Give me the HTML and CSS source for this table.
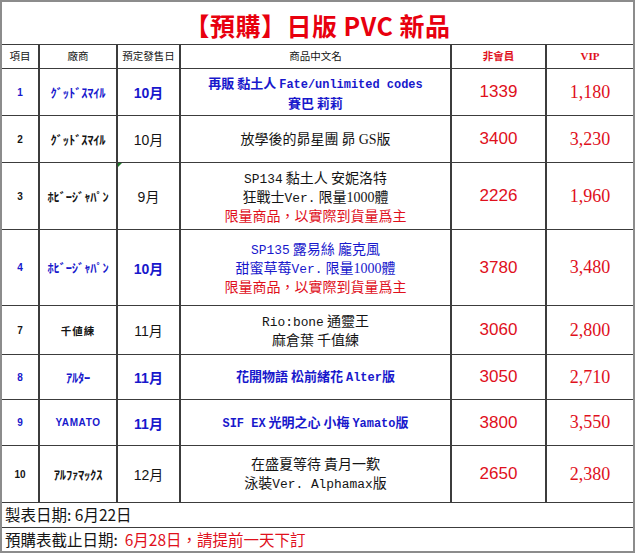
FILE: index.html
```html
<!DOCTYPE html>
<html lang="zh-Hant">
<head>
<meta charset="utf-8">
<title>【預購】日版 PVC 新品</title>
<link rel="stylesheet" href="styles.css">
</head>
<body>
<div class="sheet">
  <div class="c title">【預購】日版 PVC 新品</div>

  <div class="c hd">項目</div>
  <div class="c hd">廠商</div>
  <div class="c hd">預定發售日</div>
  <div class="c hd">商品中文名</div>
  <div class="c hd red b">非會員</div>
  <div class="c hd red b vip">VIP</div>

  <div class="c no blue">1</div>
  <div class="c mk blue">ｸﾞｯﾄﾞｽﾏｲﾙ</div>
  <div class="c mo blue b">10月</div>
  <div class="c pn blue b sm"><div>再販 黏土人 <span class="m">Fate/unlimited codes</span></div><div>賽巴 莉莉</div></div>
  <div class="c p1">1339</div>
  <div class="c p2">1,180</div>

  <div class="c no">2</div>
  <div class="c mk">ｸﾞｯﾄﾞｽﾏｲﾙ</div>
  <div class="c mo">10月</div>
  <div class="c pn"><div>放學後的昴星團 昴 <span class="s">GS</span>版</div></div>
  <div class="c p1">3400</div>
  <div class="c p2">3,230</div>

  <div class="c no">3</div>
  <div class="c mk">ﾎﾋﾞｰｼﾞｬﾊﾟﾝ</div>
  <div class="c mo note">9月</div>
  <div class="c pn"><div><span class="m">SP134</span> 黏土人 安妮洛特</div><div>狂戰士<span class="m">Ver.</span> 限量<span class="s">1000</span>體</div><div class="red">限量商品，以實際到貨量爲主</div></div>
  <div class="c p1">2226</div>
  <div class="c p2">1,960</div>

  <div class="c no blue">4</div>
  <div class="c mk blue">ﾎﾋﾞｰｼﾞｬﾊﾟﾝ</div>
  <div class="c mo blue b">10月</div>
  <div class="c pn blue"><div><span class="m">SP135</span> 露易絲 龐克風</div><div>甜蜜草莓<span class="m">Ver.</span> 限量<span class="s">1000</span>體</div><div class="red">限量商品，以實際到貨量爲主</div></div>
  <div class="c p1">3780</div>
  <div class="c p2">3,480</div>

  <div class="c no">7</div>
  <div class="c mk kanji">千値練</div>
  <div class="c mo">11月</div>
  <div class="c pn"><div><span class="m">Rio:bone</span> 通靈王</div><div>麻倉葉 千值練</div></div>
  <div class="c p1">3060</div>
  <div class="c p2">2,800</div>

  <div class="c no blue">8</div>
  <div class="c mk blue">ｱﾙﾀｰ</div>
  <div class="c mo blue b">11月</div>
  <div class="c pn blue b sm"><div>花開物語 松前緒花 <span class="m">Alter</span>版</div></div>
  <div class="c p1">3050</div>
  <div class="c p2">2,710</div>

  <div class="c no blue">9</div>
  <div class="c mk blue latin">YAMATO</div>
  <div class="c mo blue b">11月</div>
  <div class="c pn blue b sm"><div><span class="m">SIF EX</span> 光明之心 小梅 <span class="m">Yamato</span>版</div></div>
  <div class="c p1">3800</div>
  <div class="c p2">3,550</div>

  <div class="c no">10</div>
  <div class="c mk">ｱﾙﾌｧﾏｯｸｽ</div>
  <div class="c mo">12月</div>
  <div class="c pn loose"><div>在盛夏等待 貴月一歎</div><div>泳裝<span class="m">Ver. Alphamax</span>版</div></div>
  <div class="c p1">2650</div>
  <div class="c p2">2,380</div>

  <div class="c foot">製表日期: 6月22日</div>
  <div class="c foot">預購表截止日期:&nbsp;&nbsp;<span class="red">6月28日，請提前一天下訂</span></div>
</div>
</body>
</html>
```
FILE: styles.css
```css
html, body {
  margin: 0;
  padding: 0;
  background: #ffffff;
}

.sheet {
  box-sizing: border-box;
  width: 635px;
  height: 553px;
  border: 2px solid #8c8c8c;
  display: grid;
  grid-template-columns: 36px 76px 61px 269px 93px 86px;
  grid-template-rows: 42px 23px 46px 46px 66px 75px 48px 44px 45px 56px 24px 23px;
  column-gap: 2px;
  row-gap: 1px;
  background: #3c3c3c;
  font-family: "Noto Sans CJK TC", "Noto Sans CJK JP", sans-serif;
  color: #141414;
}

.c {
  background: #ffffff;
  display: flex;
  flex-direction: column;
  align-items: center;
  justify-content: center;
  text-align: center;
  position: relative;
}

.title {
  grid-column: 1 / -1;
  color: #e8000e;
  font-weight: 700;
  font-size: 25px;
  line-height: 1;
  padding-top: 5px;
  letter-spacing: 0.5px;
}

.hd {
  font-size: 10.5px;
  line-height: 1;
}

.red { color: #e0101c; }
.blue { color: #1818cc; }
.b { font-weight: 700; }

.vip {
  font-family: "Liberation Serif", serif;
  font-size: 11px;
}

.no {
  font-family: "Liberation Sans", sans-serif;
  font-weight: 700;
  font-size: 10px;
}

.mk {
  font-family: "Noto Sans CJK JP", sans-serif;
  font-weight: 700;
  font-size: 12.5px;
  letter-spacing: -0.2px;
}

.mk.kanji {
  font-size: 10.5px;
  letter-spacing: 1px;
}

.mk.latin {
  font-family: "Liberation Sans", sans-serif;
  font-size: 10px;
  letter-spacing: 0.6px;
}

.mo {
  font-family: "Liberation Sans", "Noto Sans CJK TC", sans-serif;
  font-size: 14px;
}

.note::before {
  content: "";
  position: absolute;
  left: 0;
  top: 0;
  border-top: 4px solid #1e7a2a;
  border-right: 4px solid transparent;
}

.pn {
  font-size: 14px;
  line-height: 17px;
}

.pn.sm {
  font-size: 13px;
  line-height: 17px;
}

.pn.loose {
  line-height: 18.5px;
}

.m {
  font-family: "Liberation Mono", monospace;
  font-size: 0.92em;
}

.s {
  font-family: "Liberation Serif", serif;
}

.p1 {
  font-family: "Liberation Sans", sans-serif;
  font-size: 17px;
  color: #e0101c;
}

.p2 {
  font-family: "Liberation Serif", serif;
  font-size: 18px;
  color: #e0101c;
}

.foot {
  grid-column: 1 / -1;
  flex-direction: row;
  justify-content: flex-start;
  padding-left: 3px;
  font-size: 15.5px;
  line-height: 1;
}
```
